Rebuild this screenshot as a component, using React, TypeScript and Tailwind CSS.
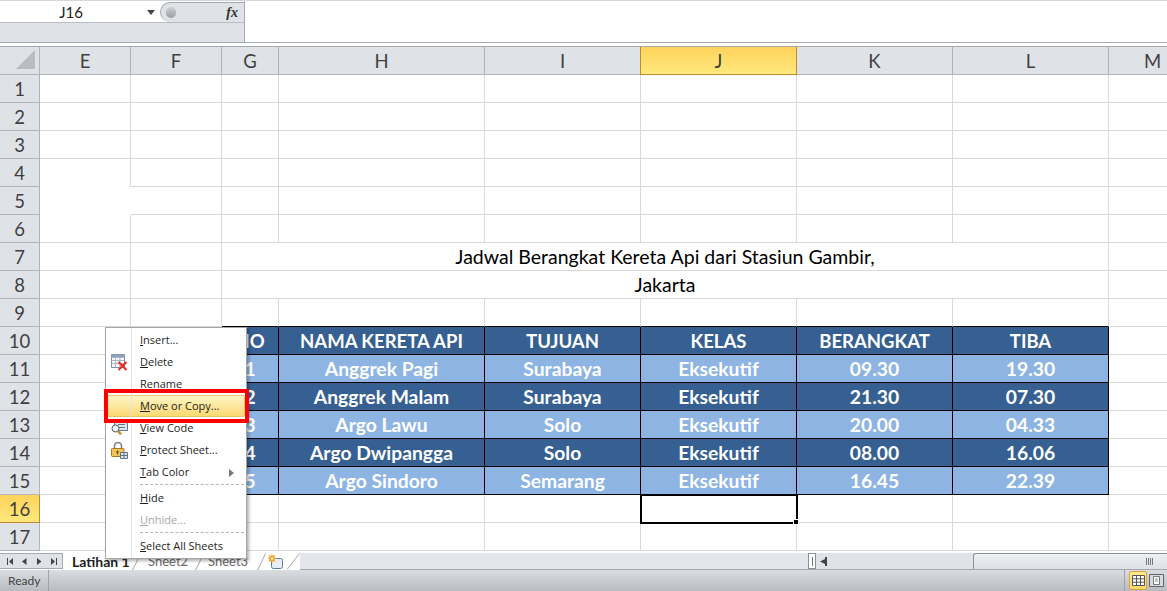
import React from "react";

const columns = ["E", "F", "G", "H", "I", "J", "K", "L", "M"];
const rows = Array.from({ length: 17 }, (_, i) => i + 1);

const table = [
  ["NO", "NAMA KERETA API", "TUJUAN", "KELAS", "BERANGKAT", "TIBA"],
  ["1", "Anggrek Pagi", "Surabaya", "Eksekutif", "09.30", "19.30"],
  ["2", "Anggrek Malam", "Surabaya", "Eksekutif", "21.30", "07.30"],
  ["3", "Argo Lawu", "Solo", "Eksekutif", "20.00", "04.33"],
  ["4", "Argo Dwipangga", "Solo", "Eksekutif", "08.00", "16.06"],
  ["5", "Argo Sindoro", "Semarang", "Eksekutif", "16.45", "22.39"],
];

function RowHeader({ n }: { n: number }) {
  const active = n === 16;
  return (
    <div
      className={
        active
          ? "flex items-center justify-center border-r border-b border-[#c28a30] bg-gradient-to-b from-[#ffd35c] to-[#ffe87c] pt-[2px] text-[18.5px] text-[#3f3f3f]"
          : "flex items-center justify-center border-r border-b border-[#b1b5ba] bg-[#dfe3e8] pt-[2px] text-[18.5px] text-[#3f3f3f]"
      }
    >
      {n}
    </div>
  );
}

function Cell({ className = "" }: { className?: string }) {
  return <div className={`border-[#d9d9d9] ${className}`} />;
}

function plainCellClass(r: number, c: string) {
  // E4:F5 has merged-looking gaps in the gridlines
  if (c === "E" && (r === 4 || r === 5)) return r === 4 ? "border-r" : "";
  if (c === "F" && r === 10) return "border-b border-r-black border-r";
  if (c === "F" && r > 10 && r < 16) return "border-b border-r border-r-black";
  if (r === 9 && !["E", "F", "M"].includes(c)) return "border-b border-r border-b-black";
  if (r === 16 && c === "J") return "relative border-r border-b";
  return "border-r border-b";
}

function TableRow({ cells, index }: { cells: string[]; index: number }) {
  const dark = index % 2 === 0;
  return (
    <>
      {cells.map((text, i) => (
        <div
          key={i}
          className={
            index === 0
              ? "flex items-center justify-center border-r border-b border-black bg-[#366092] pt-[2px] text-[18.5px] font-bold text-white"
              : dark
                ? "flex items-center justify-center border-r border-b border-black bg-[#366092] pt-[2px] text-[19.3px] font-bold text-white"
                : "flex items-center justify-center border-r border-b border-black bg-[#8db4e2] pt-[2px] text-[19.3px] font-bold text-white"
          }
        >
          {text}
        </div>
      ))}
    </>
  );
}

function SheetGrid() {
  return (
    <div className="grid grid-cols-[40px_91px_91px_57px_206px_156px_156px_156px_156px_88px] grid-rows-[28px] auto-rows-[28px]">
      <div className="flex items-end justify-end border-r border-b border-[#b1b5ba] bg-[#dfe3e8] p-[5px] pr-[4px]">
        <svg width="19" height="19" viewBox="0 0 19 19">
          <path d="M19 0V19H0Z" fill="#b9bdc1" />
        </svg>
      </div>
      {columns.map((c) =>
        c === "J" ? (
          <div
            key={c}
            className="-ml-px flex items-center justify-center border-x border-b border-[#c28a30] bg-gradient-to-b from-[#ffd35c] to-[#ffe87c] pt-[2px] text-[18.5px] text-[#3f3f3f]"
          >
            {c}
          </div>
        ) : (
          <div
            key={c}
            className="flex items-center justify-center border-r border-b border-[#b1b5ba] bg-[#dfe3e8] pt-[2px] text-[18.5px] text-[#3f3f3f]"
          >
            {c}
          </div>
        ),
      )}

      {rows.map((r) => {
        if (r === 7 || r === 8) {
          return (
            <React.Fragment key={r}>
              <RowHeader n={r} />
              <Cell className="border-r border-b" />
              <Cell className="border-r border-b" />
              <div className="col-span-6 flex items-center justify-center border-r border-b border-[#d9d9d9] pt-px text-[19.5px] text-black">
                {r === 7 ? "Jadwal Berangkat Kereta Api dari Stasiun Gambir," : "Jakarta"}
              </div>
              <Cell className="border-r border-b" />
            </React.Fragment>
          );
        }
        if (r >= 10 && r <= 15) {
          return (
            <React.Fragment key={r}>
              <RowHeader n={r} />
              <Cell className="border-r border-b" />
              <Cell className={plainCellClass(r, "F")} />
              <TableRow cells={table[r - 10]} index={r - 10} />
              <Cell className="border-r border-b" />
            </React.Fragment>
          );
        }
        return (
          <React.Fragment key={r}>
            <RowHeader n={r} />
            {columns.map((c) => (
              <div key={c} className={`border-[#d9d9d9] ${plainCellClass(r, c)}`}>
                {r === 16 && c === "J" && (
                  <div className="absolute -top-px -left-px z-[1] h-[30px] w-[158px] border-2 border-black">
                    <div className="absolute -right-[3px] -bottom-[3px] h-[6px] w-[6px] border border-white bg-black" />
                  </div>
                )}
              </div>
            ))}
          </React.Fragment>
        );
      })}
    </div>
  );
}

function FormulaBar() {
  return (
    <div className="h-[47px] shrink-0 border-t border-[#d4d6d9] bg-white">
      <div className="flex h-[42px] border-b border-[#a5a8ac]">
        <div className="flex w-[245px] flex-col border-r border-[#a5a8ac]">
          <div className="flex h-[22px] border-b border-[#b9bcc0] bg-white pt-px">
            <div className="flex w-[160px] items-center pl-[1px]">
              <span className="w-[140px] text-center text-[15px] text-[#222]">J16</span>
              <svg width="8" height="5" viewBox="0 0 8 5" className="ml-[6px]">
                <path d="M0 0H8L4 5Z" fill="#444" />
              </svg>
            </div>
            <div className="flex flex-1 items-center justify-between rounded-l-[11px] border-t border-l border-[#a5a8ac] bg-[#dfe3e8] pr-[6px] pl-[5px]">
              <span className="h-[11px] w-[10px] rounded-full bg-gradient-to-b from-[#cfd1d4] to-[#9a9da1]" />
              <span className="font-['Liberation_Serif',serif] text-[14px] font-bold text-[#333] italic">fx</span>
            </div>
          </div>
          <div className="flex-1 bg-[#dfe3e8]" />
        </div>
        <div className="flex-1 bg-white" />
      </div>
      <div className="h-[4px] border-b border-[#a5a8ac] bg-white" />
    </div>
  );
}

function NavArrows() {
  return (
    <div className="flex h-[16px] w-[63px] items-center gap-[7px] border-t border-r border-b border-[#a5a8ac] bg-[#dfe3e8] pl-[7px]">
      <svg width="6" height="7" viewBox="0 0 6 7">
        <path d="M0 0H1V7H0ZM6 0V7L2 3.5Z" fill="#444" />
      </svg>
      <svg width="5" height="7" viewBox="0 0 5 7" className="ml-[2px]">
        <path d="M4.5 0V7L0 3.5Z" fill="#444" />
      </svg>
      <svg width="5" height="7" viewBox="0 0 5 7" className="ml-[3px]">
        <path d="M0 0V7L4.5 3.5Z" fill="#444" />
      </svg>
      <svg width="6" height="7" viewBox="0 0 6 7" className="ml-[2px]">
        <path d="M0 0V7L4 3.5ZM5 0H6V7H5Z" fill="#444" />
      </svg>
    </div>
  );
}

function TabSlant() {
  return (
    <svg width="9" height="17" viewBox="0 0 9 17" className="shrink-0">
      <path d="M0 16.5H1L8.5 .5" fill="none" stroke="#a5a8ac" />
    </svg>
  );
}

function SheetTabs() {
  return (
    <div className="flex h-[19px] shrink-0 bg-white pt-[2px]">
      <NavArrows />
      <div className="flex h-[17px] w-[237px] items-center bg-white text-[13px]">
        <span className="ml-[9px] w-[60px] text-[14px] font-bold text-[#222]">Latihan 1</span>
        <TabSlant />
        <span className="ml-[7px] w-[47px] text-[#6a6a6a]">Sheet2</span>
        <TabSlant />
        <span className="ml-[4px] w-[49px] text-[#6a6a6a]">Sheet3</span>
        <TabSlant />
        <svg width="16" height="16" viewBox="0 0 16 16" className="ml-[2px] shrink-0">
          <rect x="3.5" y="4.5" width="11" height="10" rx="2" fill="#e8eef5" stroke="#5f7f9f" />
          <path d="M4 0L5 2 7.5 1 6.5 3.5 8.5 4.5 6.5 5.5 7.5 8 5 7 4 9 3 7 .5 8 1.5 5.5 -.5 4.5 1.5 3.5 .5 1 3 2Z" fill="#f0a630" />
          <circle cx="4" cy="4.5" r="1.2" fill="#fff3c4" />
        </svg>
        <svg width="13" height="17" viewBox="0 0 13 17" className="ml-[3px] shrink-0">
          <path d="M0 16.5L12.5 .5" fill="none" stroke="#a5a8ac" />
        </svg>
      </div>
      <div className="flex h-[17px] flex-1 items-center border-b border-[#a5a8ac] bg-[#e3e6ea]">
        <div className="ml-auto flex h-full">
          <div className="flex h-[16px] w-[8px] items-center justify-center border border-[#8c8f93] bg-white">
            <span className="h-[9px] w-px bg-[#777]" />
          </div>
          <div className="flex w-[157px] items-center bg-[#dfe3e8] pl-[3px]">
            <svg width="8" height="9" viewBox="0 0 8 9" className="ml-[1px]">
              <path d="M7 0V9H5V7L0 4.5 5 2V0Z" fill="#444" />
            </svg>
          </div>
          <div className="flex w-[194px] items-center justify-end rounded-tl-[3px] border-t border-l border-[#8c8f93] bg-gradient-to-b from-[#eef0f3] to-[#dde0e5] pr-[14px]">
            <div className="flex gap-px">
              <span className="h-[7px] w-px bg-[#777]" />
              <span className="h-[7px] w-px bg-[#777]" />
              <span className="h-[7px] w-px bg-[#777]" />
              <span className="h-[7px] w-px bg-[#777]" />
            </div>
          </div>
        </div>
      </div>
    </div>
  );
}

function StatusBar() {
  return (
    <div className="flex h-[21px] shrink-0 items-center bg-gradient-to-b from-[#d9dce0] to-[#b9bdc2] text-[12px] text-[#444]">
      <div className="flex h-full w-[49px] items-center border-r border-[#9fa3a8] pl-[8px]">Ready</div>
      <div className="ml-auto flex h-full items-center border-l border-[#9fa3a8] pr-[3px] pl-[4px]">
        <div className="flex h-[19px] w-[18px] items-center justify-center rounded-[2px] border border-[#d9a441] bg-gradient-to-b from-[#ffe88c] to-[#ffd766]">
          <svg width="13" height="11" viewBox="0 0 13 11">
            <path d="M.5.5H12.5V10.5H.5ZM.5 3.8H12.5M.5 7.2H12.5M4.5.5V10.5M8.5.5V10.5" fill="#fff" stroke="#555" />
          </svg>
        </div>
        <svg width="15" height="13" viewBox="0 0 15 13" className="ml-[2px]">
          <path d="M.5.5H14.5V12.5H.5Z" fill="#d8dbdf" stroke="#666" />
          <path d="M4.5 2.5H10.5V10.5H4.5Z" fill="#fff" stroke="#777" />
          <path d="M6 5H9M6 7H9" stroke="#888" />
        </svg>
      </div>
    </div>
  );
}

function DeleteIcon() {
  return (
    <svg width="17" height="17" viewBox="0 0 17 17">
      <path d="M.5.5H13.5V13.5H.5Z" fill="#f4f6f9" stroke="#7c8da3" />
      <path d="M.5 3.5H13.5M.5 6.5H13.5M.5 9.5H13.5M4.5.5V13.5M9 .5V13.5" stroke="#a9b7c8" fill="none" />
      <path d="M.5.5H13.5V3H.5Z" fill="#8ea1b8" />
      <path d="M7.5 8L15.5 16M15.5 8L7.5 16" stroke="#e0332a" strokeWidth="2.2" />
    </svg>
  );
}

function CodeIcon() {
  return (
    <svg width="17" height="15" viewBox="0 0 17 15">
      <path d="M3.5.5H16.5V9.5H3.5Z" fill="#dfe7f1" stroke="#5f7488" />
      <path d="M7 3.5H14M7 6.5H14" stroke="#5f7488" />
      <circle cx="4.5" cy="7.5" r="3.5" fill="#eef4fa" stroke="#55606c" />
      <path d="M7 10L10 13.5" stroke="#c58a2a" strokeWidth="2.5" />
    </svg>
  );
}

function LockIcon() {
  return (
    <svg width="17" height="17" viewBox="0 0 17 17">
      <path d="M3.5 7V4a3.5 3.5 0 0 1 7 0v3" fill="none" stroke="#7d8084" strokeWidth="1.6" />
      <rect x=".5" y="6.5" width="12.5" height="8" rx="1" fill="#eec65a" stroke="#a57a20" />
      <path d="M6.5 8.5v4M5 10h3" stroke="#6b4a12" />
      <path d="M9.5 10.5H16.5V16.5H9.5ZM9.5 13.5H16.5M13 10.5V16.5" fill="#dfe7f1" stroke="#5f7488" />
    </svg>
  );
}

function MenuItem({
  first,
  rest,
  icon,
  disabled,
  active,
  arrow,
}: {
  first: string;
  rest: string;
  icon?: React.ReactNode;
  disabled?: boolean;
  active?: boolean;
  arrow?: boolean;
}) {
  return (
    <div
      className={
        active
          ? "mx-px flex h-[22px] items-center rounded-[2px] border border-[#e8c668] bg-gradient-to-b from-[#fdf5c4] to-[#fbd970] pt-px"
          : "mx-px flex h-[22px] items-center border border-transparent pt-px"
      }
    >
      <span className="flex w-[23px] shrink-0 justify-center">{icon}</span>
      <span className={disabled ? "ml-[9px] text-[#a6a6a6]" : "ml-[9px] text-[#1e1e1e]"}>
        <span className="underline">{first}</span>
        {rest}
      </span>
      {arrow && (
        <svg width="5" height="8" viewBox="0 0 5 8" className="mr-[10px] ml-auto">
          <path d="M0 0L5 4 0 8Z" fill="#777" />
        </svg>
      )}
    </div>
  );
}

function Separator() {
  return <div className="mt-px mr-[2px] mb-[2px] ml-[34px] h-px border-t border-dashed border-[#b5b5b5]" />;
}

function ContextMenu() {
  return (
    <div className="absolute top-[327px] left-[105px] z-10 w-[142px] border border-[#a5a5a5] bg-white py-px font-['Open_Sans',sans-serif] text-[11px] shadow-[2px_2px_3px_rgba(0,0,0,0.3)]">
      <div className="absolute inset-y-0 left-[25px] w-px bg-[#e2e3e5]" />
      <MenuItem first="I" rest="nsert..." />
      <MenuItem first="D" rest="elete" icon={<DeleteIcon />} />
      <MenuItem first="R" rest="ename" />
      <MenuItem first="M" rest="ove or Copy..." active />
      <MenuItem first="V" rest="iew Code" icon={<CodeIcon />} />
      <MenuItem first="P" rest="rotect Sheet..." icon={<LockIcon />} />
      <MenuItem first="T" rest="ab Color" arrow />
      <Separator />
      <MenuItem first="H" rest="ide" />
      <MenuItem first="U" rest="nhide..." disabled />
      <Separator />
      <MenuItem first="S" rest="elect All Sheets" />
      {/* annotation box around the highlighted item */}
      <div className="absolute top-[61px] -left-[2px] h-[34px] w-[145px] border-[4px] border-[#ff0000]" />
    </div>
  );
}

export default function App() {
  return (
    <div className="relative flex h-[591px] w-[1167px] flex-col overflow-hidden bg-white font-['Lato',sans-serif]">
      <FormulaBar />
      <div className="h-[504px] shrink-0 overflow-hidden">
        <SheetGrid />
      </div>
      <SheetTabs />
      <StatusBar />
      <ContextMenu />
    </div>
  );
}
